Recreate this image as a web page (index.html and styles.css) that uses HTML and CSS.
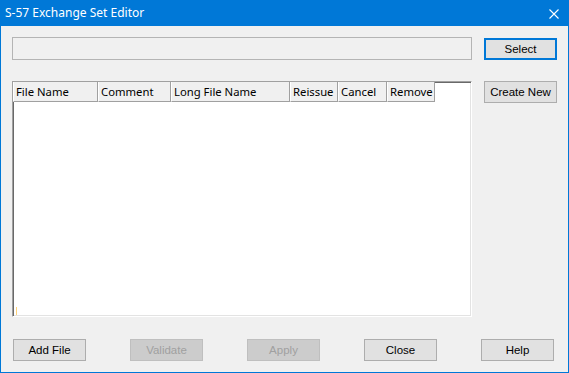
FILE: index.html
```html
<!DOCTYPE html>
<html lang="en">
<head>
    <meta charset="UTF-8">
    <title>S-57 Exchange Set Editor</title>
    <link rel="stylesheet" href="styles.css">
</head>
<body>
    <div class="window">
        <div class="titlebar">
            <span class="title">S-57 Exchange Set Editor</span>
            <svg class="close" width="10" height="10" viewBox="0 0 10 10">
                <path d="M0.5 0.5 L9.5 9.5 M9.5 0.5 L0.5 9.5" stroke="#fff" stroke-width="1.1" fill="none"/>
            </svg>
        </div>

        <div class="content">
            <div class="main">
                <input type="text" class="path-box" readonly>
                <button class="btn default">Select</button>

                <div class="list">
                    <div class="header">
                        <div class="col c1">File Name</div>
                        <div class="col c2">Comment</div>
                        <div class="col c3">Long File Name</div>
                        <div class="col c4">Reissue</div>
                        <div class="col c5">Cancel</div>
                        <div class="col c6">Remove</div>
                    </div>
                    <span class="caret"></span>
                </div>
                <div class="side">
                    <button class="btn">Create New</button>
                </div>
            </div>

            <div class="footer">
                <button class="btn">Add File</button>
                <button class="btn" disabled>Validate</button>
                <button class="btn" disabled>Apply</button>
                <button class="btn">Close</button>
                <button class="btn">Help</button>
            </div>
        </div>
    </div>
</body>
</html>
```

FILE: styles.css
```css
* {
    box-sizing: border-box;
}
body {
    margin: 0;
    width: 569px;
    height: 373px;
    overflow: hidden;
    font-family: "Liberation Sans", Arial, sans-serif;
    font-size: 11px;
}
.window {
    height: 373px;
    display: flex;
    flex-direction: column;
    background: #f0f0f0;
    border: 1px solid #0078d7;
    border-top: none;
}
.titlebar {
    height: 26px;
    margin: 0 -1px;
    background: #0078d7;
    color: #fff;
    display: flex;
    align-items: center;
    justify-content: space-between;
    padding: 0 10px 0 5px;
}
.title {
    font-family: "Noto Sans", sans-serif;
    font-size: 12px;
    padding-bottom: 1px;
}
.close {
    display: block;
    margin-top: 1px;
}
.content {
    flex: 1;
    display: flex;
    flex-direction: column;
    padding: 11px;
}
.main {
    display: grid;
    grid-template-columns: 460px 73px;
    grid-template-rows: 23px 236px;
    column-gap: 12px;
    row-gap: 21px;
}
.path-box {
    width: 460px;
    height: 23px;
    margin: 0;
    border: 1px solid #b4b4b4;
    background: #f0f0f0;
}
.btn {
    width: 73px;
    height: 22px;
    margin: 0;
    padding: 0 0 1px;
    background: #e1e1e1;
    border: 1px solid #adadad;
    font-family: "Liberation Sans", Arial, sans-serif;
    font-size: 11.5px;
    color: #000;
}
.btn.default {
    border: 2px solid #0078d7;
    margin-top: 1px;
}
.btn:disabled {
    background: #cccccc;
    border-color: #bfbfbf;
    color: #a0a0a0;
}
.list {
    position: relative;
    background: #fff;
    border: 1px solid;
    border-color: #a0a0a0 #fff #fff #a0a0a0;
    box-shadow: inset 1px 1px #696969, inset -1px -1px #e3e3e3;
}
.header {
    display: flex;
    height: 20px;
}
.col {
    height: 20px;
    background: #f0f0f0;
    border-right: 1px solid #a0a0a0;
    border-bottom: 1px solid #a0a0a0;
    border-left: 1px solid #fff;
    padding: 0 0 0 2px;
    font-family: "Noto Sans", sans-serif;
    font-size: 11.3px;
    line-height: 19px;
    white-space: nowrap;
    overflow: hidden;
}
.c1 { width: 85px; }
.c2 { width: 73px; }
.c3 { width: 119px; }
.c4 { width: 48px; }
.c5 { width: 49px; }
.c6 { width: 48px; }
.caret {
    position: absolute;
    left: 3px;
    bottom: 1px;
    width: 1px;
    height: 8px;
    background: #ffd27a;
}
.footer {
    margin-top: 22px;
    display: flex;
    justify-content: space-between;
    padding: 0 3px 0 1px;
}
```
